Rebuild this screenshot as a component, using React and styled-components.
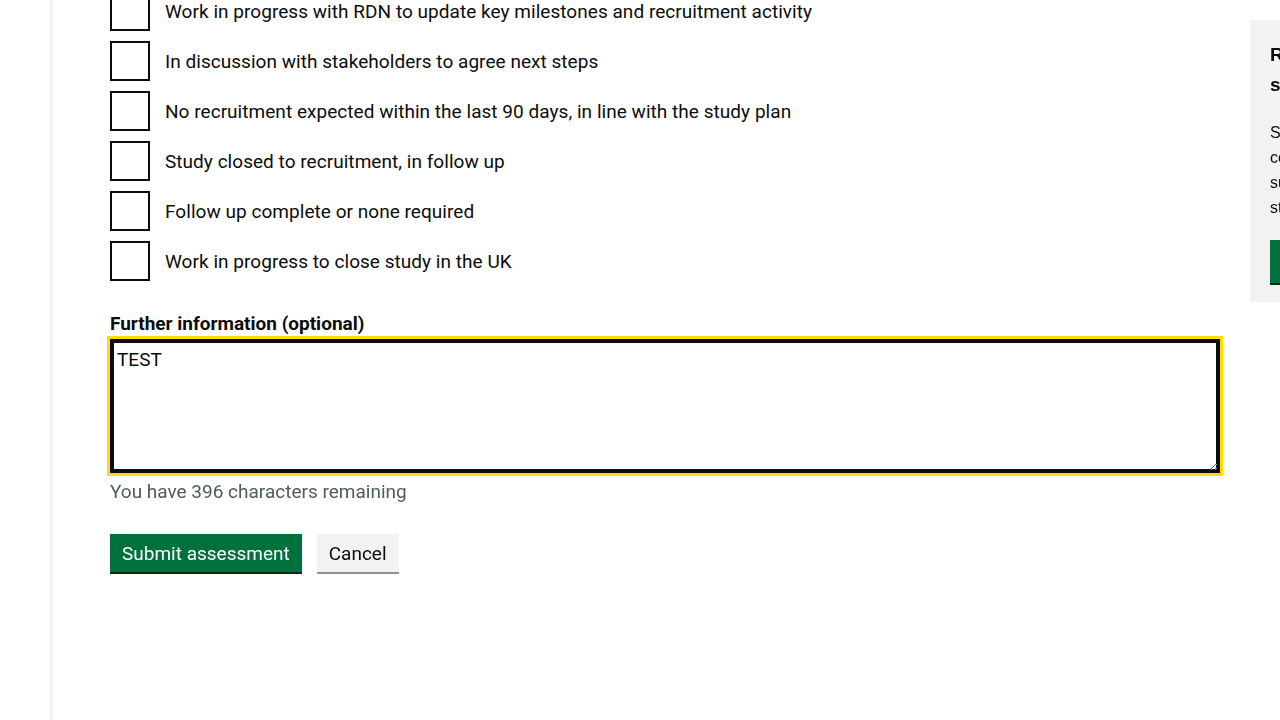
import React from "react";
import styled, { createGlobalStyle } from "styled-components";

const Global = createGlobalStyle`
  html, body { margin: 0; padding: 0; overflow: hidden; background: #fff; }
  body { font-family: Roboto, "Liberation Sans", Arial, sans-serif; color: #0b0c0c; }
  * { box-sizing: border-box; }
`;

const Page = styled.div`
  display: flex;
  min-height: 100vh;
  width: 1280px;
  overflow: hidden;
`;

const Sidebar = styled.nav`
  flex: 0 0 52px;
  border-right: 2px solid #efefef;
  box-shadow: 1px 0 2px rgba(0, 0, 0, 0.04);
`;

const Main = styled.main`
  flex: 1 1 auto;
  display: flex;
  align-items: flex-start;
  gap: 30px;
  padding-left: 58px;
  min-width: 0;
`;

const Column = styled.div`
  flex: 0 0 1110px;
  width: 1110px;
`;

const CheckboxList = styled.div`
  margin-top: -9px;
  margin-bottom: 30px;
`;

const CheckItem = styled.label`
  display: flex;
  align-items: flex-start;
  min-height: 40px;
  margin-bottom: 10px;
  &:last-child { margin-bottom: 0; }
  cursor: pointer;
`;

const Box = styled.span`
  flex: 0 0 40px;
  width: 40px;
  height: 40px;
  border: 2px solid #0b0c0c;
  background: #fff;
`;

const CheckText = styled.span`
  padding: 8px 15px 5px;
  font-size: 19px;
  line-height: 25px;
  letter-spacing: 0.04px;
`;

const Label = styled.label`
  display: block;
  font-size: 19px;
  line-height: 25px;
  font-weight: 700;
  margin-bottom: 3px;
`;

const TextArea = styled.textarea`
  display: block;
  width: 100%;
  height: 134px;
  margin: 0 0 6px;
  padding: 7px 5px 5px;
  font-family: Roboto, Arial, sans-serif;
  font-size: 19px;
  line-height: 1.25;
  color: #0b0c0c;
  caret-color: #0b0c0c;
  border: 2px solid #0b0c0c;
  border-radius: 0;
  box-shadow: ${(p) => (p.$focused ? "inset 0 0 0 2px #0b0c0c" : "none")};
  outline: ${(p) => (p.$focused ? "3px solid #ffdd00" : "none")};
  outline-offset: 0;
  resize: vertical;
  &:focus {
    outline: 3px solid #ffdd00;
    box-shadow: inset 0 0 0 2px #0b0c0c;
  }
`;

const Hint = styled.div`
  font-size: 19px;
  line-height: 25px;
  color: #505a5f;
  margin: 0 0 30px;
`;

const ButtonRow = styled.div`
  display: flex;
  gap: 15px;
  align-items: flex-start;
`;

const Button = styled.button`
  font-family: Roboto, Arial, sans-serif;
  font-size: 19px;
  line-height: 23px;
  padding: 8px 12px 7px;
  border: 0;
  border-radius: 0;
  cursor: pointer;
  background: ${(p) => (p.$variant === "secondary" ? "#f3f2f1" : "#00703c")};
  color: ${(p) => (p.$variant === "secondary" ? "#0b0c0c" : "#ffffff")};
  box-shadow: 0 2px 0 ${(p) => (p.$variant === "secondary" ? "#929191" : "#002d18")};
`;

const Aside = styled.aside`
  flex: 0 0 300px;
  margin-top: 20px;
  background: #f3f2f1;
  padding: 20px 20px 19px;
  font-family: "Liberation Sans", Arial, sans-serif;
`;

const AsideHeading = styled.h2`
  margin: 0 0 20px;
  font-size: 19px;
  line-height: 30px;
  font-weight: 700;
`;

const AsideText = styled.p`
  margin: 0 0 20px;
  font-size: 16px;
  line-height: 25px;
`;

const AsideButton = styled.button`
  display: block;
  font-family: "Liberation Sans", Arial, sans-serif;
  font-size: 16px;
  height: 43px;
  padding: 0 12px;
  border: 0;
  border-radius: 0;
  background: #00703c;
  color: #fff;
  box-shadow: 0 2px 0 #002d18;
`;

const options = [
  "Work in progress with RDN to update key milestones and recruitment activity",
  "In discussion with stakeholders to agree next steps",
  "No recruitment expected within the last 90 days, in line with the study plan",
  "Study closed to recruitment, in follow up",
  "Follow up complete or none required",
  "Work in progress to close study in the UK",
];

export default function App() {
  const ref = React.useRef(null);
  React.useEffect(() => {
    if (ref.current) {
      ref.current.focus();
      const len = ref.current.value.length;
      ref.current.setSelectionRange(len, len);
    }
  }, []);
  return (
    <>
      <Global />
      <Page>
        <Sidebar />
        <Main>
          <Column>
            <CheckboxList>
              {options.map((o) => (
                <CheckItem key={o}>
                  <Box />
                  <CheckText>{o}</CheckText>
                </CheckItem>
              ))}
            </CheckboxList>
            <Label htmlFor="further">Further information (optional)</Label>
            <TextArea id="further" ref={ref} $focused defaultValue="TEST" rows={5} />
            <Hint>You have 396 characters remaining</Hint>
            <ButtonRow>
              <Button>Submit assessment</Button>
              <Button $variant="secondary">Cancel</Button>
            </ButtonRow>
          </Column>
          <Aside>
            <AsideHeading>
              Request
              <br />
              support
            </AsideHeading>
            <AsideText>
              Sponsors can request
              <br />
              contact from RDN to
              <br />
              support delivery of this
              <br />
              study.
            </AsideText>
            <AsideButton>Request support</AsideButton>
          </Aside>
        </Main>
      </Page>
    </>
  );
}
